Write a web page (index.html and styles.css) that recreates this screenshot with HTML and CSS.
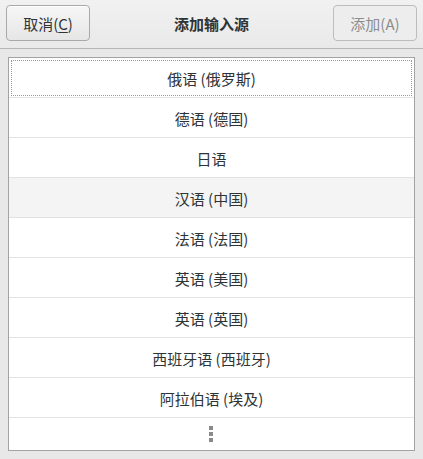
FILE: index.html
```html
<!DOCTYPE html>
<html lang="zh-CN">
<head>
<meta charset="utf-8">
<title>添加输入源</title>
<link rel="stylesheet" href="styles.css">
</head>
<body>
<div class="dialog">
  <header class="headerbar">
    <button class="btn">取消(<u>C</u>)</button>
    <div class="title">添加输入源</div>
    <button class="btn disabled">添加(A)</button>
  </header>
  <div class="content">
    <ul class="list">
      <li class="row focused">俄语 (俄罗斯)</li>
      <li class="row">德语 (德国)</li>
      <li class="row">日语</li>
      <li class="row hover">汉语 (中国)</li>
      <li class="row">法语 (法国)</li>
      <li class="row">英语 (美国)</li>
      <li class="row">英语 (英国)</li>
      <li class="row">西班牙语 (西班牙)</li>
      <li class="row">阿拉伯语 (埃及)</li>
      <li class="more"><span class="dots"><i></i><i></i><i></i></span></li>
    </ul>
  </div>
</div>
</body>
</html>
```

FILE: styles.css
```css
* { box-sizing: border-box; }
html, body {
  margin: 0;
  padding: 0;
  background: #e8e8e8;
  font-family: "Noto Sans CJK SC", "Noto Sans", sans-serif;
  font-size: 15px;
  color: #2e3436;
}
.dialog {
  width: 423px;
  height: 459px;
  display: flex;
  flex-direction: column;
}
.headerbar {
  height: 49px;
  display: flex;
  align-items: center;
  justify-content: space-between;
  padding: 0 6px 1px;
  background: linear-gradient(#f1f1f1, #e9e9e9);
  border-bottom: 1px solid #b6b6b6;
}
.btn {
  width: 84px;
  height: 36px;
  margin-top: -1px;
  border: 1px solid #a9a9a9;
  border-radius: 4px;
  background: linear-gradient(#f6f6f6, #e6e6e6);
  font: inherit;
  color: #2e3436;
  padding: 0;
  box-shadow: inset 0 1px #fff;
}
.btn u { text-underline-offset: 2px; }
.btn.disabled {
  border-color: #bcbcbc;
  background: #ededed;
  color: #8b8e8f;
  box-shadow: none;
}
.title {
  font-weight: bold;
  color: #2e3436;
}
.content {
  padding: 8px 8px 0;
}
.list {
  list-style: none;
  margin: 0;
  padding: 0;
  background: #fff;
  border: 1px solid #a3a3a3;
}
.row {
  height: 40px;
  display: flex;
  align-items: center;
  justify-content: center;
  border-bottom: 1px solid #e2e2e2;
  padding-top: 1px;
}
.row.hover { background: #f4f4f4; }
.row.focused {
  outline: 1px dotted #9a9a9a;
  outline-offset: -3px;
}
.more {
  height: 32px;
  display: flex;
  align-items: center;
  justify-content: center;
}
.dots {
  display: flex;
  flex-direction: column;
  gap: 2px;
  margin-left: -1px;
}
.dots i {
  display: block;
  width: 4px;
  height: 4px;
  background: #8a8a8a;
}
```
